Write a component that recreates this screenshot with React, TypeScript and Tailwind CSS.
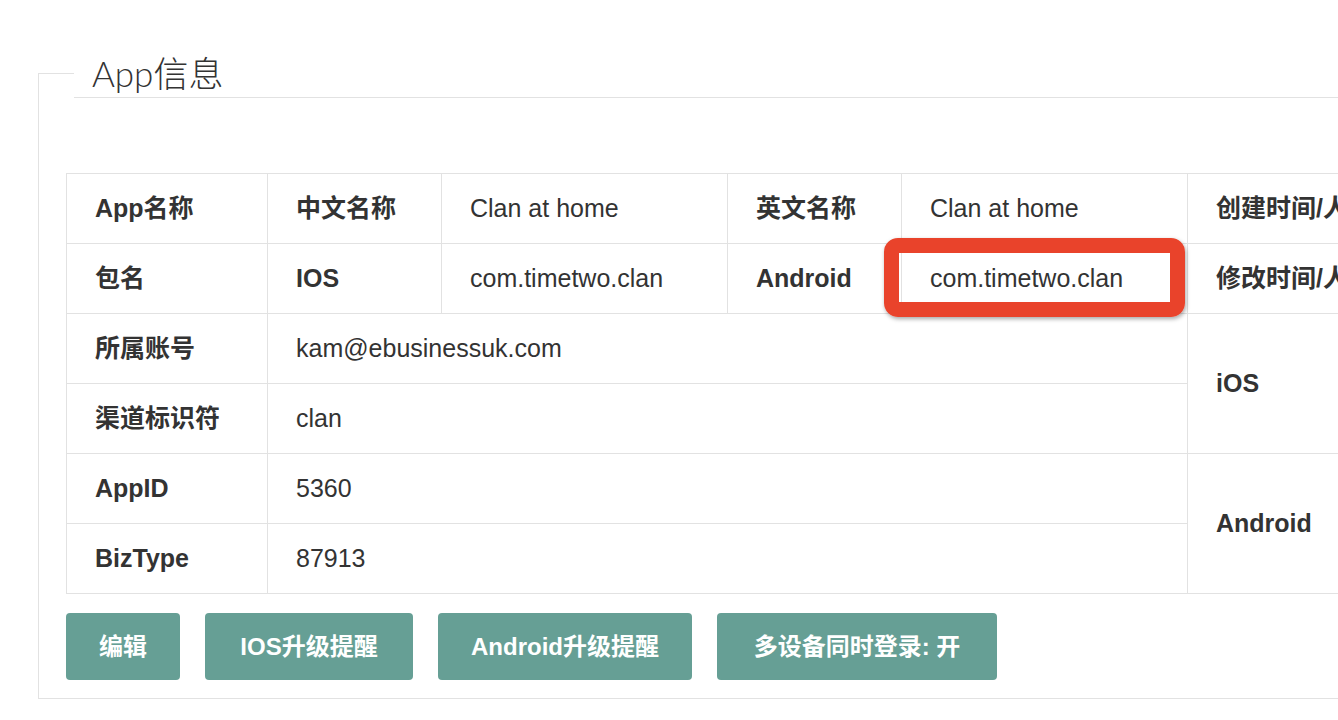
const font = "font-['Liberation_Sans','Noto_Sans_CJK_SC',sans-serif]";

const cell = 'border border-[#e2e2e2] px-[28px] align-middle text-left whitespace-nowrap overflow-hidden';
const th = `${cell} font-bold`;
const td = `${cell} font-normal`;

function AppInfoTable() {
  return (
    <table className="w-[1707px] table-fixed border-collapse text-[25px] text-[#333]">
      <colgroup>
        <col className="w-[201px]" />
        <col className="w-[174px]" />
        <col className="w-[286px]" />
        <col className="w-[174px]" />
        <col className="w-[286px]" />
        <col className="w-[300px]" />
        <col className="w-[286px]" />
      </colgroup>
      <tbody>
        <tr className="h-[70px]">
          <th className={th}>App名称</th>
          <th className={th}>中文名称</th>
          <td className={td}>Clan at home</td>
          <th className={th}>英文名称</th>
          <td className={td}>Clan at home</td>
          <th className={th}>创建时间/人</th>
          <td className={td}>2016-03-02</td>
        </tr>
        <tr className="h-[70px]">
          <th className={th}>包名</th>
          <th className={th}>IOS</th>
          <td className={td}>com.timetwo.clan</td>
          <th className={th}>Android</th>
          <td className={td}>com.timetwo.clan</td>
          <th className={th}>修改时间/人</th>
          <td className={td}>2016-03-02</td>
        </tr>
        <tr className="h-[70px]">
          <th className={th}>所属账号</th>
          <td className={td} colSpan={4}>
            kam@ebusinessuk.com
          </td>
          <th className={th} rowSpan={2}>
            iOS
          </th>
          <td className={td} rowSpan={2}></td>
        </tr>
        <tr className="h-[70px]">
          <th className={th}>渠道标识符</th>
          <td className={td} colSpan={4}>
            clan
          </td>
        </tr>
        <tr className="h-[70px]">
          <th className={th}>AppID</th>
          <td className={td} colSpan={4}>
            5360
          </td>
          <th className={th} rowSpan={2}>
            Android
          </th>
          <td className={td} rowSpan={2}></td>
        </tr>
        <tr className="h-[70px]">
          <th className={th}>BizType</th>
          <td className={td} colSpan={4}>
            87913
          </td>
        </tr>
      </tbody>
    </table>
  );
}

const actions = [
  { label: '编辑', width: 'w-[114px]' },
  { label: 'IOS升级提醒', width: 'w-[208px]' },
  { label: 'Android升级提醒', width: 'w-[254px]' },
  { label: '多设备同时登录: 开', width: 'w-[280px]' },
];

export default function App() {
  return (
    <div className={`relative h-[720px] w-[1338px] overflow-hidden bg-white ${font}`}>
      <div className="ml-[38px] w-[1800px] pt-[50px]">
        <div className="flex items-start">
          <div className="mt-[23px] h-[25px] w-[36px] shrink-0 border-t border-l border-[#e2e2e2]" />
          <div className="h-[48px] flex-1 border-b border-[#e2e2e2] pl-[18px] font-['Lato','Noto_Sans_CJK_SC',sans-serif] text-[35px] leading-[46px] font-light text-[#333]">
            App信息
          </div>
        </div>
        <div className="border-b border-l border-[#e2e2e2] pt-[75px] pb-[18px] pl-[27px]">
          <AppInfoTable />
          <div className="mt-[19px] flex gap-[25px]">
            {actions.map((action) => (
              <button
                key={action.label}
                className={`h-[67px] ${action.width} rounded-[4px] bg-[#669f95] text-center text-[24px] font-bold text-white`}
              >
                {action.label}
              </button>
            ))}
          </div>
        </div>
      </div>

      {/* annotation marker */}
      <div className="absolute top-[238px] left-[884px] h-[79px] w-[301px] rounded-[14px] border-[15px] border-[#e9432b] shadow-[1px_2px_4px_rgba(0,0,0,0.35)]" />
    </div>
  );
}
